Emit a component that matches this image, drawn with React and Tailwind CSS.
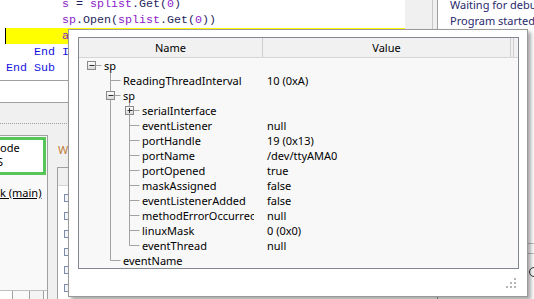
import React from 'react';

const ui = { fontFamily: "'Noto Sans', 'Liberation Sans', sans-serif" };
const mono = { fontFamily: "'Liberation Mono', 'DejaVu Sans Mono', monospace" };

const rows = [
  { name: 'sp', level: 0, exp: 'minus' },
  { name: 'ReadingThreadInterval', level: 1, value: '10 (0xA)' },
  { name: 'sp', level: 1, exp: 'minus' },
  { name: 'serialInterface', level: 2, exp: 'plus' },
  { name: 'eventListener', level: 2, value: 'null' },
  { name: 'portHandle', level: 2, value: '19 (0x13)' },
  { name: 'portName', level: 2, value: '/dev/ttyAMA0' },
  { name: 'portOpened', level: 2, value: 'true' },
  { name: 'maskAssigned', level: 2, value: 'false' },
  { name: 'eventListenerAdded', level: 2, value: 'false' },
  { name: 'methodErrorOccurred', level: 2, value: 'null' },
  { name: 'linuxMask', level: 2, value: '0 (0x0)' },
  { name: 'eventThread', level: 2, value: 'null', last: true },
  { name: 'eventName', level: 1, last: true },
];

const LINE = '#a3a3a3';

// tree lines + expander box for one row
const TreeGlyph = ({ level, exp, last }) => {
  const cx = 12.5 + 19 * level;
  const ancestors = level === 2 ? [1] : [];
  return (
    <svg width={23 + 19 * level} height={15} className="shrink-0">
      {ancestors.map((c) => (
        <line key={c} x1={12.5 + 19 * c} x2={12.5 + 19 * c} y1={0} y2={15} stroke={LINE} />
      ))}
      {level > 0 && <line x1={cx} x2={cx} y1={0} y2={last ? 7.5 : 15} stroke={LINE} />}
      <line x1={exp ? cx + 4.5 : cx} x2={cx + 10} y1={7.5} y2={7.5} stroke={LINE} />
      {exp && (
        <g>
          <defs>
            <linearGradient id="expg" x1="0" y1="0" x2="0" y2="1">
              <stop offset="0" stopColor="#ffffff" />
              <stop offset="1" stopColor="#d6d6d6" />
            </linearGradient>
          </defs>
          <rect x={cx - 4} y={3.5} width={8} height={8} fill="url(#expg)" stroke="#8a8a8a" />
          <line x1={cx - 2} x2={cx + 3} y1={7.5} y2={7.5} stroke="#303030" />
          {exp === 'plus' && <line x1={cx} x2={cx} y1={5} y2={10} stroke="#303030" />}
        </g>
      )}
    </svg>
  );
};

const P = ({ children }) => <span className="text-[#8d1cc9]">{children}</span>;
const D = ({ children }) => <span className="text-[#1f1f5c]">{children}</span>;
const K = ({ children }) => <span className="text-[#1515e0]">{children}</span>;

const CodeEditor = () => (
  <div className="w-[405px] h-[80px] bg-white overflow-hidden pl-[5px] text-[11.67px] leading-[16px]" style={mono}>
    <div className="mt-[-4px] whitespace-pre">
      <div className="h-[16px] border-l border-transparent">
        {'        '}<P>s</P><D> = </D><P>splist</P><D>.Get(</D><P>0</P><D>)</D>
      </div>
      <div className="h-[16px] border-l border-transparent">
        {'        '}<P>sp</P><D>.Open(</D><P>splist</P><D>.Get(</D><P>0</P><D>))</D>
      </div>
      <div className="h-[16px] border-l border-black bg-[#ffff00]">
        {'        '}<P>astream</P><D>.Initialize(</D><P>sp</P><D>.GetInputStream, </D><P>sp</P><D>.GetOutputStream)</D>
      </div>
      <div className="h-[16px] border-l border-transparent">
        {'    '}<K>End If</K>
      </div>
      <div className="h-[16px] border-l border-transparent">
        <K>End Sub</K>
      </div>
    </div>
  </div>
);

const Popup = () => (
  <div
    className="absolute left-[68px] top-[29px] w-[460px] h-[268px] bg-white border border-[#9a9a9a] shadow-[3px_3px_4px_rgba(0,0,0,0.35)] flex flex-col text-[11px] text-black"
    style={ui}
  >
    <div className="mt-[7px] ml-[9px] w-[441px] h-[232px] border border-[#828790] bg-[#f8f8f8] overflow-hidden flex flex-col">
      <div className="h-[20px] shrink-0 flex bg-[#f1f1f1] border-b border-[#d5d5d5] leading-[19px]">
        <div className="w-[184px] shrink-0 border-r border-[#cfcfcf] text-center">Name</div>
        <div className="w-[248px] shrink-0 border-r border-[#cfcfcf] text-center">Value</div>
        <div className="w-[3px] shrink-0 border-r border-[#cfcfcf]" />
      </div>
      <div className="flex flex-col">
        {rows.map((r, i) => (
          <div key={i} className="h-[15px] flex items-center leading-[15px] whitespace-nowrap">
            <div className="w-[184px] shrink-0">
              <div className="w-[175px] overflow-hidden flex items-center">
                <TreeGlyph level={r.level} exp={r.exp} last={r.last} />
                <span className="ml-[2px]">{r.name}</span>
              </div>
            </div>
            <div className="pl-[4px]">{r.value || ''}</div>
          </div>
        ))}
      </div>
    </div>
    <div className="flex justify-end pt-[9px] pr-[11px]">
      <svg width="10" height="10">
        {[[8, 0], [4, 4], [8, 4], [0, 8], [4, 8], [8, 8]].map(([x, y], i) => (
          <rect key={i} x={x} y={y} width="2" height="2" fill="#b5b5b5" />
        ))}
      </svg>
    </div>
  </div>
);

const App = () => (
  <div className="relative w-[534px] h-[299px] overflow-hidden bg-[#f0f0f0] flex" style={ui}>
    <div className="w-[437px] shrink-0 flex flex-col">
      <div className="flex h-[80px]">
        <CodeEditor />
        <div className="w-[27px] bg-[#f0f0f0]" />
        <div className="w-[5px] border-l border-[#c8c8c8] bg-[#f0f0f0]" />
      </div>
      <div className="h-[23px] bg-white border-t border-b border-[#a0a0a0]" />
      <div className="h-[20px]" />
      <div className="h-[12px] border-t border-dotted border-[#a0a0a0]" />
      <div className="flex-1 flex text-[11px] text-black">
        <div className="w-[48px] shrink-0 bg-[#f9f9f9] border-t border-r border-[#a0a0a0] flex flex-col overflow-hidden">
          <div className="mt-[1px] -ml-[3px] w-[49px] h-[38px] shrink-0 border-[3px] border-[#58c558] bg-white leading-[14px] pt-[1px] overflow-hidden whitespace-nowrap">
            <div className="-ml-[10px]">Mode</div>
            <div className="-ml-[3px]">S</div>
          </div>
          <div className="mt-[11px] leading-[14px] underline whitespace-nowrap">k (main)</div>
          <div className="mt-auto h-[9px] flex gap-[16px] border-t border-[#c0c0c0]">
            <div className="w-[13px] border-r border-[#a0a0a0] bg-white" />
            <div className="w-[15px] border-l border-r border-[#a0a0a0] bg-[#f4f4f4]" />
          </div>
        </div>
        <div className="flex-1 pl-[9px] flex flex-col">
          <div className="mt-[8px] ml-[1px] leading-[14px] text-[#c07a36]">W</div>
          <div className="mt-[10px] flex-1 border-l border-t border-[#a0a0a0] bg-white flex flex-col">
            <div className="h-[18px] bg-[#f0f0f0] border-b border-[#d5d5d5]" />
            <div className="pt-[3px] pl-[6px] flex flex-col">
              {[0, 1, 2, 3, 4, 5].map((i) => (
                <div key={i} className="h-[18px] flex items-center">
                  <div className="w-[8px] h-[8px] border border-[#7d8ca8] bg-[#f4f6fa]" />
                </div>
              ))}
            </div>
          </div>
        </div>
      </div>
    </div>
    <div className="flex-1 bg-white border-l border-[#a0a0a0] flex flex-col">
      <div className="h-[243px] pl-[12px] text-[11px] leading-[16px] text-[#28286e] whitespace-nowrap overflow-hidden">
        <div className="mt-[-3px]">Waiting for debugger to connect...</div>
        <div>Program started.</div>
      </div>
      <div className="h-[10px] border-t border-[#c0c0c0]" />
      <div className="border-t border-[#c0c0c0] pt-[13px] pl-[91px]">
        <div className="w-[10px] h-[10px] rounded-full border border-[#333]" />
      </div>
    </div>
    <Popup />
  </div>
);

export default App;
